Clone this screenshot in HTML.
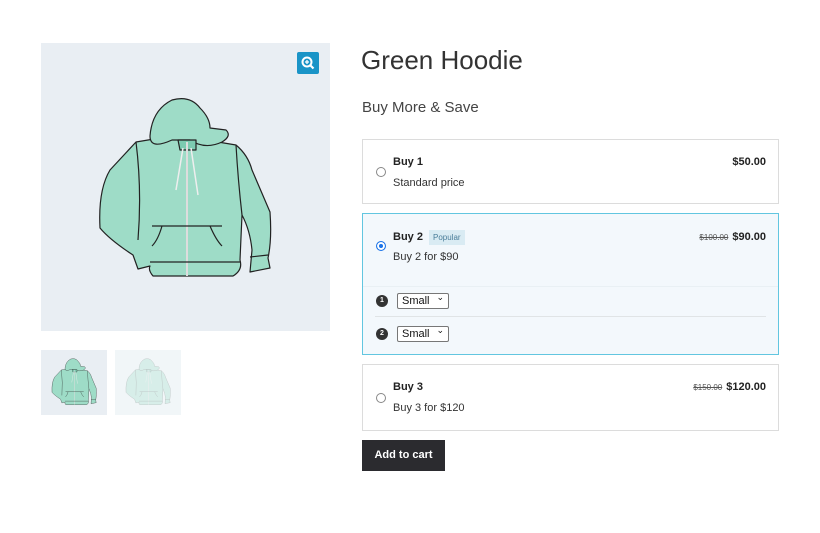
<!DOCTYPE html><html><head><style>
body{margin:0;width:820px;height:533px;background:#fff;font-family:"Liberation Sans",sans-serif;color:#333;position:relative;overflow:hidden}
.a{position:absolute}
.box{position:absolute;left:362px;width:415px;border:1px solid #dcdcdc;background:#fff}
.r{position:absolute;left:13px;width:8px;height:8px;border:1px solid #888;border-radius:50%;background:#fff}
.t{position:absolute;left:30px;font-size:11px;font-weight:bold;color:#222}
.s{position:absolute;left:30px;font-size:11px;color:#333}
.p{position:absolute;right:12px;font-size:11px;font-weight:bold;color:#222}
.p del{font-weight:normal;font-size:8px;color:#555;margin-right:4px}
.num{position:absolute;left:13px;width:12px;height:12px;border-radius:50%;background:#333;color:#fff;font-size:7px;font-weight:bold;text-align:center;line-height:12px}
.sel{position:absolute;left:34px;width:52px;height:16px;border:1px solid #777;border-radius:2px;background:#fff;font-size:11px;line-height:15px;padding-left:4px;box-sizing:border-box;color:#111}
.sel:after{content:"⌄";position:absolute;right:4px;top:-4px;font-size:9px}
</style></head><body>
<div class="a" style="left:41px;top:43px;width:289px;height:288px;background:#e9eef3"></div>
<div class="a" style="left:41px;top:350px;width:66px;height:65px;background:#e9eef3"></div>
<div class="a" style="left:115px;top:350px;width:66px;height:65px;background:#f1f6f8"></div>
<div class="a" style="left:297px;top:52px;width:22px;height:22px;background:#1a94c7;border-radius:2px"></div>
<svg class="a" style="left:297px;top:52px" width="22" height="22"><circle cx="10" cy="10" r="4.5" fill="none" stroke="#fff" stroke-width="2"/><line x1="13.5" y1="13.5" x2="16.5" y2="16.5" stroke="#fff" stroke-width="2.2"/><path d="M8 10h4M10 8v4" stroke="#fff" stroke-width="1.3"/></svg>
<svg class="a" style="left:0;top:0" width="330" height="420">
<defs>
<g id="h" stroke="#222" stroke-width="1.2" fill="#9edcc7" stroke-linejoin="round">
<path d="M136 142 L160 138 Q176 131 200 139 L236 145 Q248 155 252 170 L270 212 Q272 240 268 258 L270 268 L250 272 L252 250 Q250 230 242 215 L240 260 Q243 270 233 276 L153 276 Q148 270 150 266 L138 269 L133 255 Q110 240 100 228 Q98 190 110 170 Z"/>
<path d="M150 136 Q152 110 172 100 Q190 95 200 108 Q210 118 210 128 L226 130 Q232 136 222 142 Q205 150 190 140 L172 140 Q150 150 150 136Z"/>
<path d="M178 140 L196 140 L196 150 L180 150Z" fill="#7ccbb1"/>
<path d="M187 142 V276" stroke="#ddd" stroke-width="2"/>
<path d="M183 148 L176 190 M191 148 L198 195" stroke="#eee" stroke-width="1.5" fill="none"/>
<path d="M150 262 H240 M162 226 Q158 240 152 246 M210 226 Q216 240 222 246 M152 226 H222 M136 142 Q142 190 138 240 M236 145 Q238 180 242 215 M250 257 L268 255" fill="none"/>
</g>
</defs>
<use href="#h"/>
<g transform="translate(26,333) scale(0.26)"><use href="#h"/></g>
<g transform="translate(100,333) scale(0.26)" opacity="0.3"><use href="#h"/></g>
</svg>

<div class="a" style="left:361px;top:45px;font-size:26px;font-weight:300;color:#333">Green Hoodie</div>
<div class="a" style="left:362px;top:99px;font-size:15px;color:#444">Buy More &amp; Save</div>

<div class="box" style="top:139px;height:63px">
<div class="r" style="top:27px"></div><div class="t" style="top:16px">Buy 1</div><div class="s" style="top:37px">Standard price</div><div class="p" style="top:16px">$50.00</div></div>

<div class="box" style="top:213px;height:140px;border-color:#62c6e0;background:#f3f8fc">
<div class="r" style="top:27px;border-color:#1a73e8;background:#1a73e8;box-shadow:inset 0 0 0 2px #fff"></div>
<div class="t" style="top:17px">Buy 2 <span style="font-weight:normal;font-size:8px;color:#4a7d99;background:#d9ebf3;padding:3px 4px;margin-left:3px">Popular</span></div>
<div class="s" style="top:37px">Buy 2 for $90</div><div class="p" style="top:17px"><del>$100.00</del>$90.00</div>
<div class="a" style="left:0;right:0;top:72px;border-top:1px solid #e9f0f4"></div>
<div class="num" style="top:81px">1</div><div class="sel" style="top:79px">Small</div>
<div class="a" style="left:12px;right:12px;top:102px;border-top:1px solid #e0e4e6"></div>
<div class="num" style="top:114px">2</div><div class="sel" style="top:112px">Small</div>
</div>

<div class="box" style="top:364px;height:65px">
<div class="r" style="top:28px"></div><div class="t" style="top:16px">Buy 3</div><div class="s" style="top:37px">Buy 3 for $120</div><div class="p" style="top:16px"><del>$150.00</del>$120.00</div></div>

<div class="a" style="left:362px;top:440px;width:83px;height:31px;background:#2b2b2f;color:#fff;font-size:11px;font-weight:bold;text-align:center;line-height:31px">Add to cart</div>
</body></html>
